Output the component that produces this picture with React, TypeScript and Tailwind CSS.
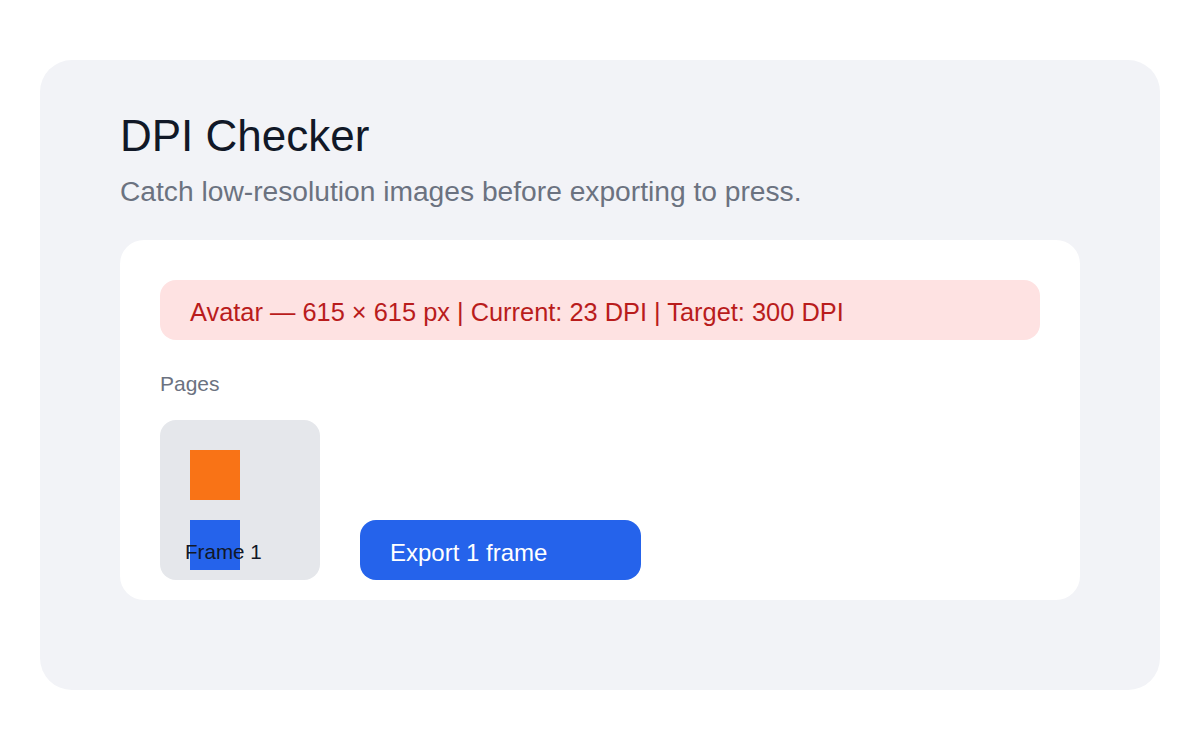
import React from "react";

const PageTile = ({ label }: { label: string }) => {
  return (
    <div className="relative flex h-[160px] w-[160px] shrink-0 flex-col gap-5 rounded-2xl bg-[#e5e7eb] p-[30px]">
      <div className="h-[50px] w-[50px] shrink-0 bg-[#f97316]" />
      <div className="h-[50px] w-[50px] shrink-0 bg-[#2563eb]" />
      <span className="absolute left-[25px] top-[122px] text-[20.6px] leading-none text-[#111827]">
        {label}
      </span>
    </div>
  );
};

const App = () => {
  return (
    <div className="min-h-[750px] bg-white px-10 pt-[60px] font-['Liberation_Sans',Arial,sans-serif]">
      <div className="h-[630px] rounded-[32px] bg-[#f2f3f7] px-20 pt-[54px]">
        <h1 className="text-[44px] font-normal leading-none text-[#111827]">DPI Checker</h1>
        <p className="mt-[19px] text-[28.2px] leading-none text-[#6b7280]">
          Catch low-resolution images before exporting to press.
        </p>

        <div className="mt-[35px] rounded-3xl bg-white px-10 pb-5 pt-10">
          <div className="flex h-[60px] items-center rounded-2xl bg-[#fee2e2] px-[30px] pt-[5px] text-[25.4px] leading-none text-[#b91c1c]">
            Avatar — 615 × 615 px | Current: 23 DPI | Target: 300 DPI
          </div>

          <div className="mt-[33px] text-[21px] leading-none text-[#6b7280]">Pages</div>

          <div className="mt-[26px] flex items-end gap-10">
            <PageTile label="Frame 1" />
            <button className="flex h-[60px] w-[281px] items-center rounded-2xl bg-[#2563eb] pl-[30px] pt-[6px] text-[24px] leading-none text-white">
              Export 1 frame
            </button>
          </div>
        </div>
      </div>
    </div>
  );
};

export default App;
